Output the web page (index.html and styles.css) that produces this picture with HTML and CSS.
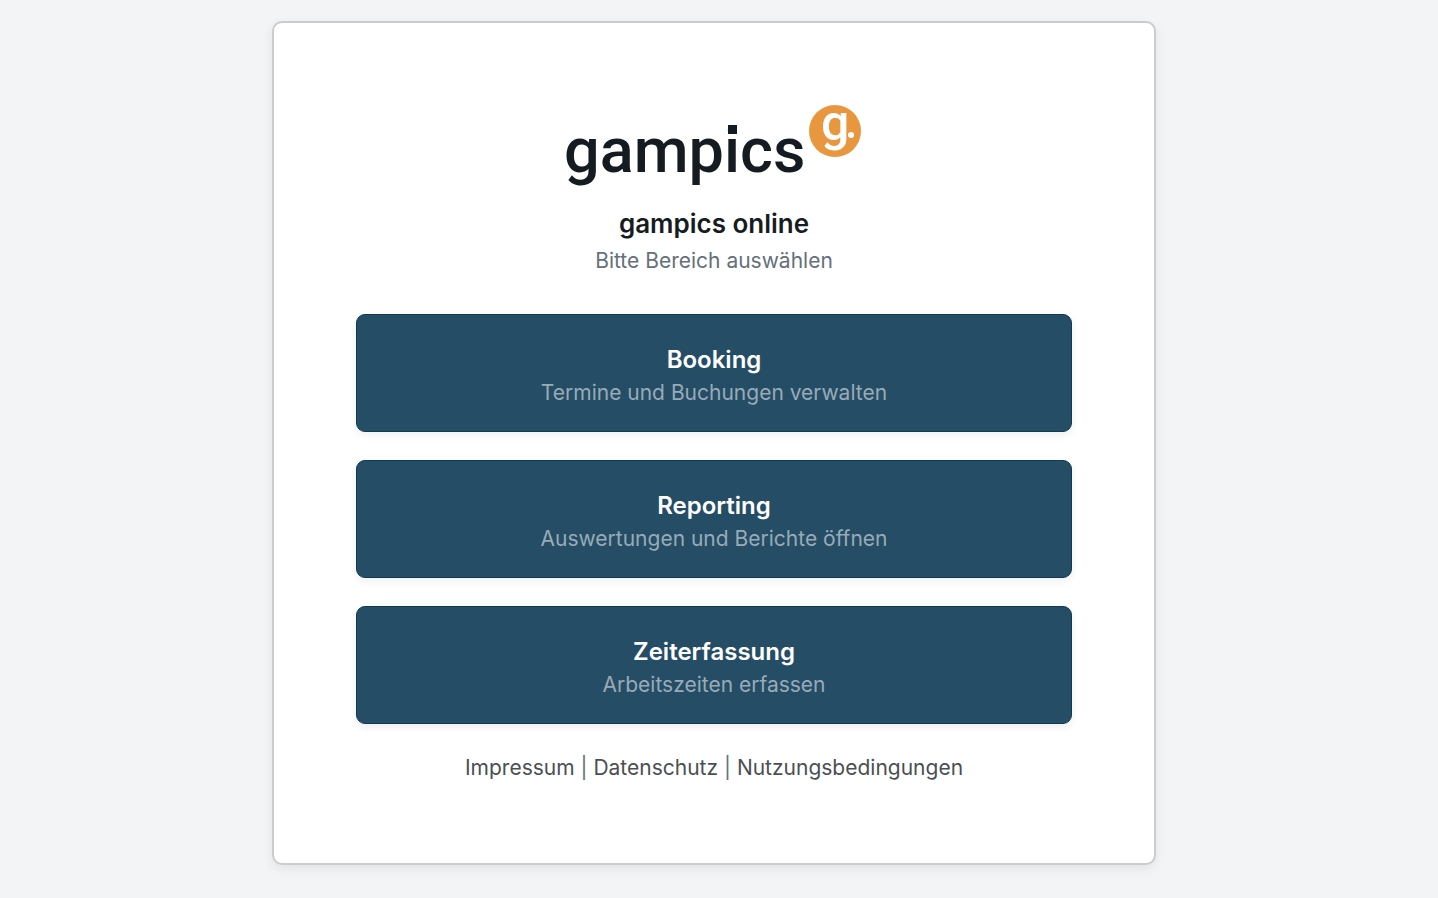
FILE: index.html
```html
<!DOCTYPE html>
<html lang="de">
<head>
<meta charset="utf-8">
<meta name="viewport" content="width=device-width, initial-scale=1">
<title>gampics online</title>
<link rel="stylesheet" href="styles.css">
</head>
<body>
<main class="card">
  <header class="intro">
    <svg class="logo" viewBox="0 0 296 82" role="img" aria-label="gampics">
      <text class="logo-word" x="-2" y="67">gampics</text>
      <rect class="logo-tittle" x="162" y="20" width="9" height="9"/>
      <circle class="logo-disc" cx="269" cy="26" r="26"/>
      <text class="logo-letter" x="255" y="35">g</text>
      <circle class="logo-dot" cx="285" cy="30" r="3"/>
    </svg>
    <h1 class="title">gampics online</h1>
    <p class="subtitle">Bitte Bereich auswählen</p>
  </header>
  <nav class="areas" aria-label="Bereiche">
    <a class="area" href="#booking"><span class="area-name">Booking</span><span class="area-text">Termine und Buchungen verwalten</span></a>
    <a class="area" href="#reporting"><span class="area-name">Reporting</span><span class="area-text">Auswertungen und Berichte öffnen</span></a>
    <a class="area" href="#zeiterfassung"><span class="area-name">Zeiterfassung</span><span class="area-text">Arbeitszeiten erfassen</span></a>
  </nav>
  <footer class="legal"><a href="#impressum">Impressum</a> | <a href="#datenschutz">Datenschutz</a> | <a href="#nutzung">Nutzungsbedingungen</a></footer>
</main>
</body>
</html>
```
FILE: styles.css
```css
* { box-sizing: border-box; }

body {
  margin: 0;
  padding: 21px 10px 32px 0;
  background: #f2f4f6;
  color: #65707a;
  font-family: Inter, "Open Sans", sans-serif;
  font-size: 21px;
  line-height: 33px;
}

.card {
  max-width: 884px;
  margin: 0 auto;
  padding: 82px;
  border: 2px solid #ccc;
  border-radius: 10px;
  background: #fff;
  box-shadow: 0 4px 12px rgba(0, 0, 0, 0.07);
  text-align: center;
}

.intro { margin-bottom: 37px; }

.logo {
  display: block;
  width: 296px;
  height: 82px;
  margin: 0 auto 16px;
  overflow: visible;
}

.logo-word {
  fill: #141b21;
  font: 500 63px Roboto, sans-serif;
}

.logo-tittle { fill: #141b21; }

.logo-disc { fill: #e9973e; }

.logo-letter {
  fill: #fff;
  font: 500 50px Roboto, sans-serif;
}

.logo-dot { fill: #fff; }

.title {
  margin: 0;
  color: #171c22;
  font-size: 26px;
  font-weight: 600;
  line-height: 41px;
}

.subtitle { margin: 0; }

.areas {
  display: grid;
  gap: 28px;
  margin-bottom: 30px;
}

.area {
  display: block;
  padding: 28px 24px 22px;
  border: 1px solid #0e3a56;
  border-radius: 9px;
  background: #254d66;
  box-shadow: 0 3px 8px rgba(0, 0, 0, 0.07);
  color: #fff;
  text-decoration: none;
}

.area-name,
.area-text { display: block; }

.area-name {
  font-size: 24px;
  font-weight: 600;
}

.area-text { color: #98abb7; }

.legal { line-height: 27px; }

.legal a {
  color: #4b4f52;
  text-decoration: none;
}
```
